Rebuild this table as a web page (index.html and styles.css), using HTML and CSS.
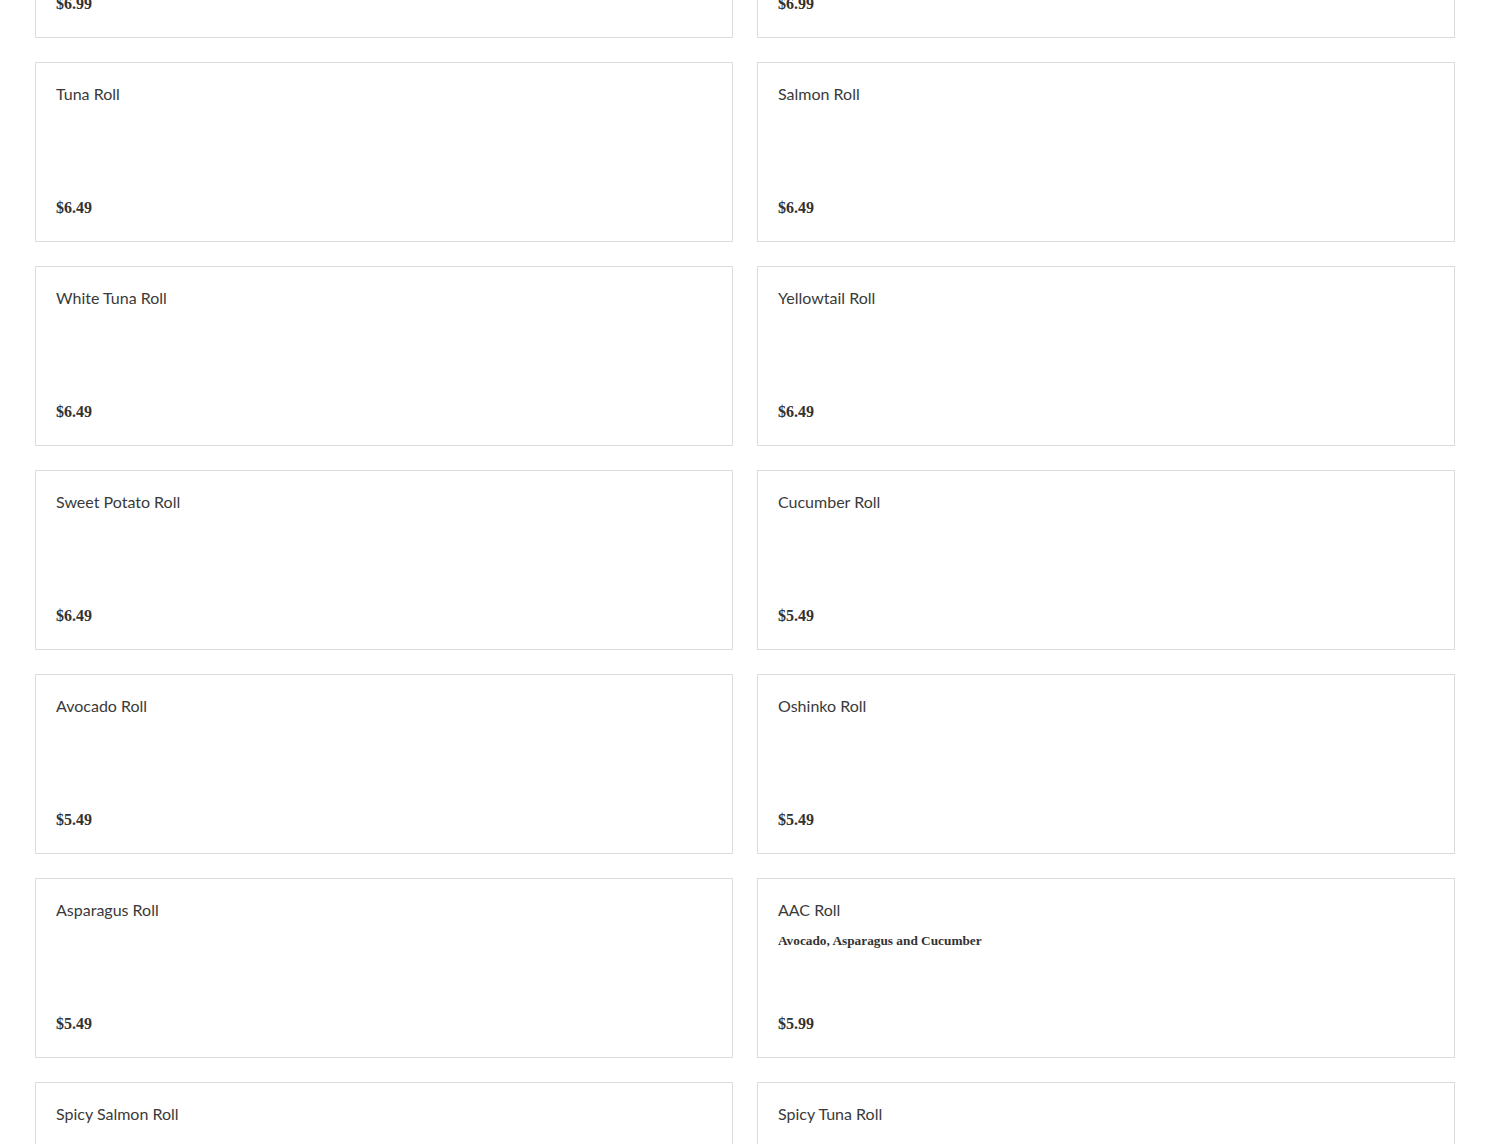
FILE: index.html
```html
<!DOCTYPE html>
<html lang="en">
<head>
    <meta charset="UTF-8">
    <meta name="viewport" content="width=device-width, initial-scale=1.0">
    <title>Rolls</title>
    <link rel="stylesheet" href="styles.css">
</head>
<body>
    <div class="menu-section">
        <div class="menu-grid">
            <div class="menu-item">
                <div class="item-name">California Roll</div>
                <div class="item-price">$6.99</div>
            </div>
            <div class="menu-item">
                <div class="item-name">Eel Roll</div>
                <div class="item-price">$6.99</div>
            </div>
            <div class="menu-item">
                <div class="item-name">Tuna Roll</div>
                <div class="item-price">$6.49</div>
            </div>
            <div class="menu-item">
                <div class="item-name">Salmon Roll</div>
                <div class="item-price">$6.49</div>
            </div>
            <div class="menu-item">
                <div class="item-name">White Tuna Roll</div>
                <div class="item-price">$6.49</div>
            </div>
            <div class="menu-item">
                <div class="item-name">Yellowtail Roll</div>
                <div class="item-price">$6.49</div>
            </div>
            <div class="menu-item">
                <div class="item-name">Sweet Potato Roll</div>
                <div class="item-price">$6.49</div>
            </div>
            <div class="menu-item">
                <div class="item-name">Cucumber Roll</div>
                <div class="item-price">$5.49</div>
            </div>
            <div class="menu-item">
                <div class="item-name">Avocado Roll</div>
                <div class="item-price">$5.49</div>
            </div>
            <div class="menu-item">
                <div class="item-name">Oshinko Roll</div>
                <div class="item-price">$5.49</div>
            </div>
            <div class="menu-item">
                <div class="item-name">Asparagus Roll</div>
                <div class="item-price">$5.49</div>
            </div>
            <div class="menu-item">
                <div class="item-name">AAC Roll</div>
                <div class="item-desc">Avocado, Asparagus and Cucumber</div>
                <div class="item-price">$5.99</div>
            </div>
            <div class="menu-item">
                <div class="item-name">Spicy Salmon Roll</div>
                <div class="item-price">$6.99</div>
            </div>
            <div class="menu-item">
                <div class="item-name">Spicy Tuna Roll</div>
                <div class="item-price">$6.99</div>
            </div>
        </div>
    </div>
</body>
</html>
```

FILE: styles.css
```css
body {
    margin: 0;
    background: #ffffff;
    font-family: 'Lato', sans-serif;
    color: #333333;
}

/* page is scrolled part way down the menu */
.menu-section {
    margin-top: -142px;
    padding: 0 35px;
}

.menu-grid {
    display: grid;
    grid-template-columns: 1fr 1fr;
    gap: 24px;
}

.menu-item {
    display: flex;
    flex-direction: column;
    height: 180px;
    box-sizing: border-box;
    border: 1px solid #dcdcdc;
    padding: 20px 20px 23px;
}

.item-name {
    font-size: 16px;
    line-height: 22px;
    font-weight: 400;
    color: #3a3a3a;
}

.item-desc {
    margin-top: 11px;
    font-family: 'Liberation Serif', serif;
    font-size: 13.3px;
    line-height: 18px;
    font-weight: 700;
    color: #333333;
}

.item-price {
    margin-top: auto;
    font-family: 'Liberation Serif', serif;
    font-size: 16px;
    line-height: 21px;
    font-weight: 700;
    color: #333333;
}
```
